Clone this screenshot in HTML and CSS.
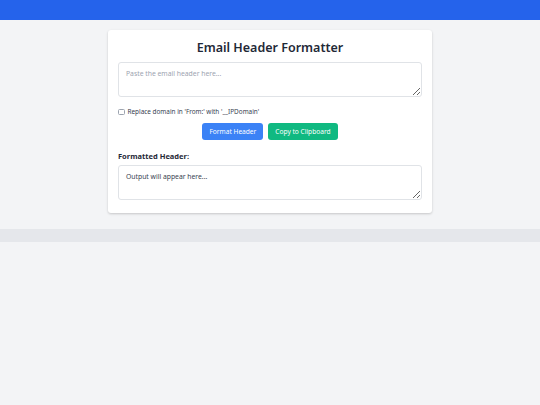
FILE: index.html
```html
<!DOCTYPE html>
<html lang="en">
<head>
<meta charset="utf-8">
<title>Email Header Formatter</title>
<link rel="stylesheet" href="styles.css">
</head>
<body>
<header class="topbar"></header>
<main class="main">
  <section class="card">
    <h1 class="title">Email Header Formatter</h1>
    <textarea class="field" placeholder="Paste the email header here..."></textarea>
    <label class="check-row"><input type="checkbox" class="check"><span>Replace domain in 'From:' with '__IPDomain'</span></label>
    <div class="actions">
      <button class="btn btn-blue">Format Header</button>
      <button class="btn btn-green">Copy to Clipboard</button>
    </div>
    <h2 class="subtitle">Formatted Header:</h2>
    <textarea class="field output" readonly>Output will appear here...</textarea>
  </section>
</main>
<footer class="footer"></footer>
</body>
</html>
```
FILE: styles.css
```css
* { box-sizing: border-box; }
html, body { margin: 0; padding: 0; }
body {
  background: #f3f4f6;
  font-family: "Noto Sans", "Open Sans", sans-serif;
  color: #1f2937;
  min-height: 405px;
}
.topbar {
  height: 20px;
  background: #2563eb;
}
.main {
  padding: 10px 0 16px;
  display: flex;
  justify-content: center;
}
.card {
  width: 324px;
  background: #fff;
  border-radius: 3px;
  box-shadow: 0 1px 3px rgba(0,0,0,0.12), 0 1px 2px rgba(0,0,0,0.07);
  padding: 8px 10px 13px;
  display: flex;
  flex-direction: column;
}
.title {
  margin: 0 0 4px;
  text-align: center;
  font-size: 12.5px;
  line-height: 20px;
  font-weight: 600;
  color: #1f2937;
}
.field {
  display: block;
  width: 100%;
  height: 35px;
  border: 1px solid #e0e3e7;
  border-radius: 3px;
  padding: 6px 7px;
  font-family: "Noto Sans", sans-serif;
  font-size: 6.8px;
  line-height: 10px;
  color: #374151;
  background: #fff;
  resize: vertical;
  margin: 0;
}
.field::placeholder { color: #9ca3af; }
.check-row {
  display: flex;
  align-items: center;
  margin-top: 10px;
  font-size: 6.4px;
  color: #374151;
  line-height: 10px;
}
.check {
  appearance: none;
  -webkit-appearance: none;
  width: 6.5px;
  height: 6.5px;
  margin: 0 3px 0 0;
  border: 1px solid #9ca3af;
  border-radius: 1.5px;
  background: #fff;
  flex: none;
}
.actions {
  display: flex;
  justify-content: center;
  gap: 5px;
  margin-top: 6px;
}
.btn {
  border: none;
  border-radius: 3px;
  height: 17px;
  padding: 0 7px;
  font-family: "Noto Sans", sans-serif;
  font-size: 6.6px;
  color: #fff;
}
.btn-blue { background: #3b82f6; }
.btn-green { background: #10b981; }
.subtitle {
  margin: 10px 0 3px;
  font-size: 7.5px;
  line-height: 12px;
  font-weight: 700;
  color: #1f2937;
}
.footer {
  height: 13px;
  background: #e5e7eb;
}
```
